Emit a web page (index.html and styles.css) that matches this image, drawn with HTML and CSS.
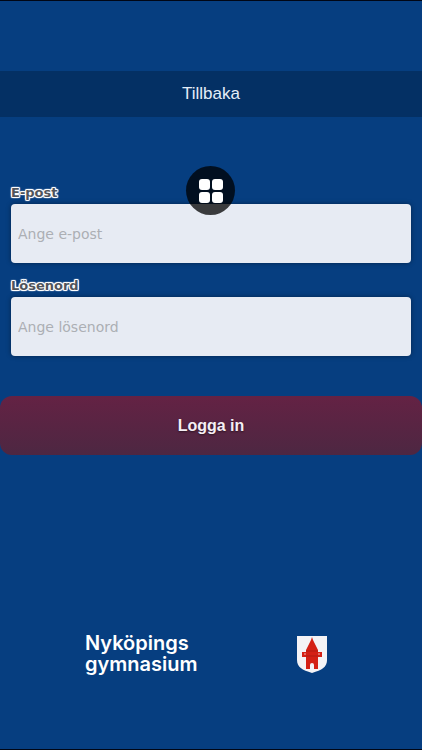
FILE: index.html
```html
<!DOCTYPE html>
<html lang="sv">

<head>
    <meta charset="UTF-8">
    <meta name="viewport" content="width=device-width, initial-scale=1.0">
    <title>Logga in</title>
    <link rel="stylesheet" href="styles.css">
</head>

<body>
    <header class="top-bar">
        <a class="back-link" href="#">Tillbaka</a>
    </header>

    <main>
        <form class="login-form">
            <div class="fields">
                <div class="field">
                    <label for="email">E-post</label>
                    <input id="email" type="email" placeholder="Ange e-post">
                    <button class="menu-button" type="button" aria-label="Meny">
                        <svg width="24" height="24" viewBox="0 0 24 24" fill="#fff">
                            <rect x="0" y="0" width="11" height="11" rx="3" />
                            <rect x="13" y="0" width="11" height="11" rx="3" />
                            <rect x="0" y="13" width="11" height="11" rx="3" />
                            <rect x="13" y="13" width="11" height="11" rx="3" />
                        </svg>
                    </button>
                </div>
                <div class="field">
                    <label for="password">Lösenord</label>
                    <input id="password" type="password" placeholder="Ange lösenord">
                </div>
            </div>
            <button class="login-button" type="submit">Logga in</button>
        </form>
    </main>

    <footer class="footer">
        <div class="school-name">Nyköpings<br>gymnasium</div>
        <svg class="crest" width="30" height="37" viewBox="0 0 30 37">
            <path d="M0 0H30V24C30 31 25 34 15 37C5 34 0 31 0 24Z" fill="#f4f3f6" />
            <!-- tower -->
            <path d="M15 1L16 4L21 14V16H25V21H21V33H17V29Q17 27 15 27Q13 27 13 29V33H9V21H5V16H9V14L14 4Z" fill="#d42015" />
            <path d="M7 18H9M21 18H23" stroke="#f0b5b0" />
            <path d="M9 15H21M9 20H21" stroke="#b01a12" />
        </svg>
    </footer>
</body>

</html>
```

FILE: styles.css
```css
* {
    box-sizing: border-box;
}

body {
    margin: 0;
    min-height: 100vh;
    display: flex;
    flex-direction: column;
    padding-top: 70px;
    background: #063e80;
    border-top: 1px solid #000615;
    border-bottom: 1px solid #000615;
    font-family: "Liberation Sans", Arial, sans-serif;
}

.top-bar {
    display: flex;
    background: #043064;
}

.back-link {
    flex: 1;
    color: #e4edf8;
    font-size: 17px;
    line-height: 46px;
    text-align: center;
    text-decoration: none;
}

/* Login form */
.fields {
    display: flex;
    flex-direction: column;
    gap: 12px;
    padding: 65px 11px 40px;
}

.field {
    position: relative;
    display: flex;
    flex-direction: column;
    font-family: "DejaVu Sans", Verdana, sans-serif;
}

.field label {
    align-self: flex-start;
    color: #50545c;
    font-size: 13px;
    font-weight: bold;
    line-height: 22px;
    text-shadow: 1px 0 0 #fff, -1px 0 0 #fff, 0 1px 0 #fff, 0 -1px 0 #fff, 1px 1px 1px #fff, -1px -1px 1px #fff, 1px -1px 1px #fff, -1px 1px 1px #fff;
}

.field input {
    width: 100%;
    height: 59px;
    padding: 0 7px;
    border: 0;
    border-radius: 4px;
    background: #e7ebf3;
    box-shadow: 0 0 5px rgba(0, 0, 0, 0.4);
    color: #333;
    font-family: inherit;
    font-size: 14px;
}

.field input::placeholder {
    color: #acafb4;
}

/* Floating menu on top of the form */
.menu-button {
    position: absolute;
    top: -16px;
    left: 50%;
    display: flex;
    align-items: center;
    justify-content: center;
    width: 49px;
    height: 49px;
    margin-left: -25px;
    padding: 0;
    border: 0;
    border-radius: 50%;
    background: rgba(0, 0, 0, 0.75);
}

.login-button {
    width: 100%;
    height: 59px;
    border: 0;
    border-radius: 12px;
    background: linear-gradient(#642244, #4d2742);
    color: #f6eff5;
    font-family: inherit;
    font-size: 16px;
    font-weight: bold;
    text-shadow: 0 1px 2px rgba(0, 0, 0, 0.5);
}

.footer {
    display: flex;
    align-items: center;
    justify-content: space-between;
    margin-top: auto;
    padding: 0 95px 74px 85px;
}

.school-name {
    color: #fff;
    font-family: Inter, "Liberation Sans", sans-serif;
    font-size: 20px;
    font-weight: 600;
    line-height: 21px;
}
```
